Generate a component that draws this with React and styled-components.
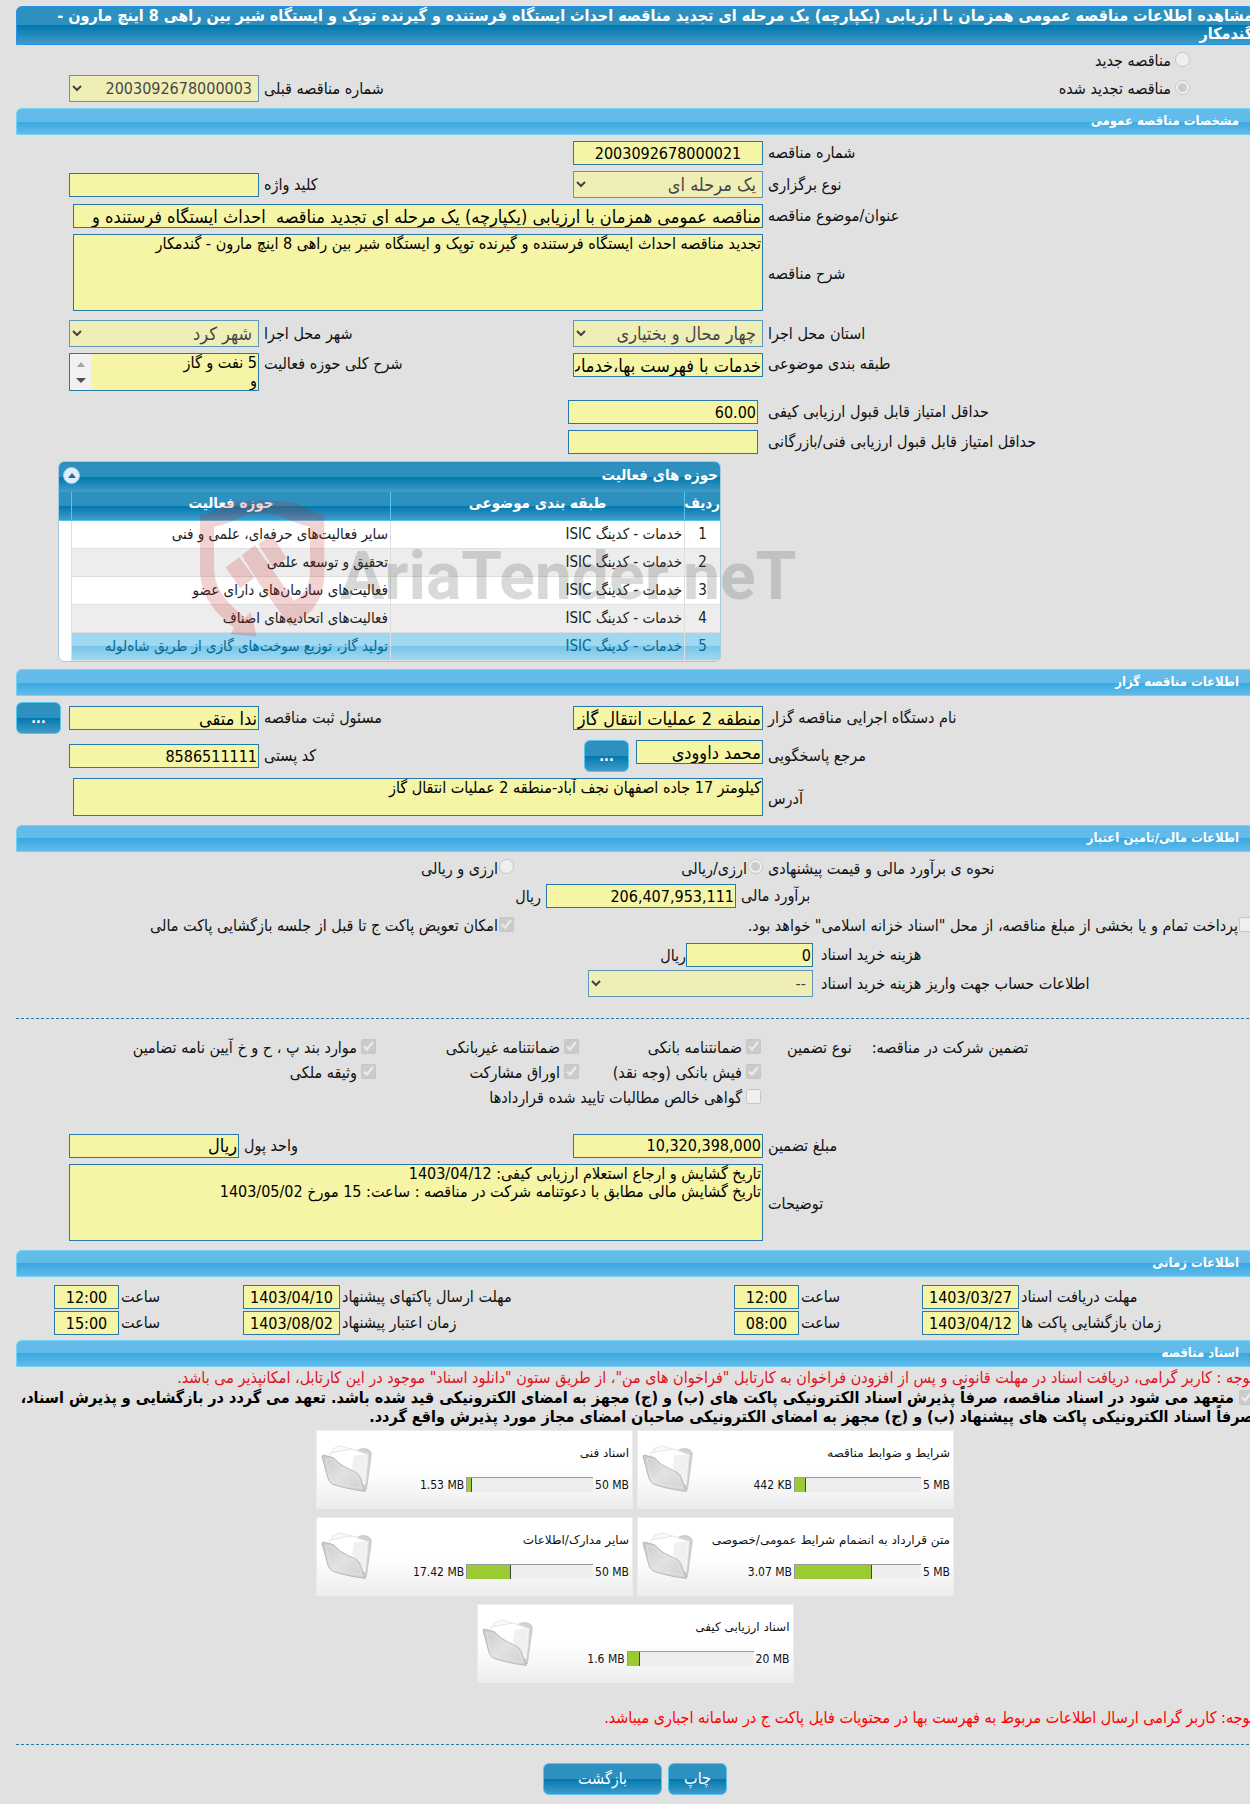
import React from "react";
import styled, { createGlobalStyle, css } from "styled-components";

const activities = [
  "سایر فعالیت‌های حرفه‌ای، علمی و فنی",
  "تحقیق و توسعه علمی",
  "فعالیت‌های سازمان‌های دارای عضو",
  "فعالیت‌های اتحادیه‌های اصناف",
  "تولید گاز، توزیع سوخت‌های گازی از طریق شاه‌لوله",
];

const times = [
  ["مهلت دریافت اسناد", "1403/03/27", "12:00", "مهلت ارسال پاکتهای پیشنهاد", "1403/04/10", "12:00"],
  ["زمان بازگشایی پاکت ها", "1403/04/12", "08:00", "زمان اعتبار پیشنهاد", "1403/08/02", "15:00"],
];

const documents = [
  { title: "شرایط و ضوابط مناقصه", used: "442 KB", max: "5 MB", percent: 9 },
  { title: "اسناد فنی", used: "1.53 MB", max: "50 MB", percent: 4 },
  { title: "متن قرارداد به انضمام شرایط عمومی/خصوصی", used: "3.07 MB", max: "5 MB", percent: 61 },
  { title: "سایر مدارک/اطلاعات", used: "17.42 MB", max: "50 MB", percent: 35 },
  { title: "اسناد ارزیابی کیفی", used: "1.6 MB", max: "20 MB", percent: 10 },
];

//A label and the text box it names, as two cells of a row
const Field = ({ id, label, value, align, words }) => (
  <>
    <Label htmlFor={id}>{label}</Label>
    <Input id={id} defaultValue={value} $align={align} $words={words} readOnly />
  </>
);

const SelectField = ({ id, label, value, words }) => (
  <>
    <Label htmlFor={id}>{label}</Label>
    <Select id={id} $words={words} disabled>
      <option>{value}</option>
    </Select>
  </>
);

const Choice = ({ type = "checkbox", name, label, checked = false, spaced }) => (
  <ChoiceLabel $spaced={spaced}>
    <Tick type={type} name={name} defaultChecked={checked} disabled />
    <span>{label}</span>
  </ChoiceLabel>
);

const FolderIcon = () => (
  <svg width="54" height="48" viewBox="0 0 56 60" preserveAspectRatio="none" aria-hidden="true">
    <defs>
      <linearGradient id="folderFront" x1="0" y1="0" x2="1" y2="1">
        <stop offset="0" stopColor="#c9c9c9" />
        <stop offset="0.5" stopColor="#e2e2e2" />
        <stop offset="1" stopColor="#cfcfcf" />
      </linearGradient>
    </defs>
    <path d="M35 9 Q41 3 47 5 Q53 7 52 13 L47 56 L38 52 Z" fill="#d2d2d2" stroke="#c4c4c4" />
    <path d="M12 5 L20 1 L40 8 L42 46 L14 30 Z" fill="#fafafa" stroke="#e2e2e2" />
    <path d="M9 10 L32 5 L49 12 L46 50 L12 40 Z" fill="#fff" stroke="#e2e2e2" />
    <path d="M34 13 L48 12 L45 48 L32 28 Z" fill="#f0f0f0" />
    <path
      d="M1 14 Q1 12 4 13 L13 16 Q19 25 29 30 Q38 34 40 39 Q43 47 46 58 Q26 55 12 49 Q8 46 7 41 Z"
      fill="url(#folderFront)"
      stroke="#b2b2b2"
    />
    <path d="M5 17 L12 19 Q18 28 28 33 Q36 36 38 41 L42 54 Q25 51 14 46 Q10 43 9 38 Z" fill="none" stroke="#e2e2e2" />
  </svg>
);

const Watermark = () => (
  <WatermarkSvg width="620" height="150" viewBox="0 0 620 150" direction="ltr" aria-hidden="true">
    <g transform="scale(0.3333)" fill="rgba(196, 28, 32, 0.2)">
      <path d="M30 62 Q75 52 110 25 Q215 8 325 25 Q360 52 403 60 V235 C403 310 365 365 300 393 L205 262 L248 225 L312 318 C345 295 360 270 360 230 V95 Q310 85 270 62 Q215 50 160 62 Q125 85 72 95 V220 C75 290 115 325 165 368 L182 350 L200 425 L122 418 L132 398 C75 355 30 300 30 225 Z" />
      <path d="M107 217 L148 186 L193 248 L150 280 Z" />
      <path d="M155 181 L195 150 L248 225 L205 262 Z" />
      <path d="M205 148 L245 120 L290 190 L250 220 Z" />
    </g>
    <text x="150" y="104">AriaTender.neT</text>
  </WatermarkSvg>
);

const ActivityTable = () => (
  <Panel>
    <PanelHead>
      <span>حوزه های فعالیت</span>
      <CollapseButton type="button" aria-label="بستن">
        <svg width="8" height="5" viewBox="0 0 8 5">
          <path d="M0 5 L4 0 L8 5 Z" fill="#2b6a94" />
        </svg>
      </CollapseButton>
    </PanelHead>
    <Table>
      <colgroup>
        <col width="36" />
        <col width="294" />
        <col />
        <col width="12" />
      </colgroup>
      <thead>
        <tr>
          <th>ردیف</th>
          <th>طبقه بندی موضوعی</th>
          <th>حوزه فعالیت</th>
          <th aria-hidden="true" />
        </tr>
      </thead>
      <tbody>
        {activities.map((activity, index) => (
          <TableRow key={activity} $selected={index === activities.length - 1}>
            <td>{index + 1}</td>
            <td>خدمات - کدینگ ISIC</td>
            <td>{activity}</td>
            <td />
          </TableRow>
        ))}
      </tbody>
    </Table>
    <Watermark />
  </Panel>
);

const DocumentCard = ({ title, used, max, percent }) => (
  <Card>
    <CardInfo>
      <CardTitle>{title}</CardTitle>
      <Usage>
        <span dir="ltr">{max}</span>
        <Track>
          <Bar style={{ width: `${percent}%` }} />
        </Track>
        <span dir="ltr">{used}</span>
      </Usage>
    </CardInfo>
    <FolderIcon />
  </Card>
);

function App() {
  return (
    <>
      <GlobalStyle />
      <Page>
        <TitleBar>
          مشاهده اطلاعات مناقصه عمومی همزمان با ارزیابی (یکپارچه) یک مرحله ای تجدید مناقصه احداث ایستگاه فرستنده و گیرنده توپک و
          ایستگاه شیر بین راهی 8 اینچ مارون - گندمکار
        </TitleBar>

        <Body>
          <KindRow>
            <Choice type="radio" name="kind" label="مناقصه جدید" spaced />
          </KindRow>
          <KindRow>
            <Choice type="radio" name="kind" label="مناقصه تجدید شده" checked spaced />
            <SelectField id="previous" label="شماره مناقصه قبلی" value="2003092678000003" />
          </KindRow>
        </Body>

        <SectionBar>مشخصات مناقصه عمومی</SectionBar>
        <Body>
          <Row>
            <Field id="number" label="شماره مناقصه" value="2003092678000021" align="center" />
          </Row>
          <Row>
            <SelectField id="stage" label="نوع برگزاری" value="یک مرحله ای" words />
            <Field id="keyword" label="کلید واژه" value="" />
          </Row>
          <Row>
            <Label htmlFor="subject">عنوان/موضوع مناقصه</Label>
            <WideInput
              id="subject"
              defaultValue="مناقصه عمومی همزمان با ارزیابی (یکپارچه) یک مرحله ای تجدید مناقصه  احداث ایستگاه فرستنده و"
              $words
              readOnly
            />
          </Row>
          <Row>
            <Label htmlFor="description">شرح مناقصه</Label>
            <WideArea
              id="description"
              defaultValue="تجدید مناقصه احداث ایستگاه فرستنده و گیرنده توپک و ایستگاه شیر بین راهی 8 اینچ مارون - گندمکار"
              readOnly
            />
          </Row>
          <Row>
            <SelectField id="province" label="استان محل اجرا" value="چهار محال و بختیاری" words />
            <SelectField id="city" label="شهر محل اجرا" value="شهر کرد" words />
          </Row>
          <TopRow>
            <Field id="category" label="طبقه بندی موضوعی" value="خدمات با فهرست بها،خدمات" words />
            <Label htmlFor="scope">شرح کلی حوزه فعالیت</Label>
            <ScrollBox>
              <ScrollArea id="scope" defaultValue={"5 نفت و گاز\nو"} readOnly />
              <ScrollStrip>
                <svg width="8" height="5" viewBox="0 0 8 5">
                  <path d="M0 5 L4 0 L8 5 Z" fill="#a3a3a3" />
                </svg>
                <svg width="10" height="5" viewBox="0 0 10 5">
                  <path d="M0 0 L5 5 L10 0 Z" fill="#505050" />
                </svg>
              </ScrollStrip>
            </ScrollBox>
          </TopRow>
          <ScoreRow>
            <Field id="quality" label="حداقل امتیاز قابل قبول ارزیابی کیفی" value="60.00" />
          </ScoreRow>
          <ScoreRow>
            <Field id="technical" label="حداقل امتیاز قابل قبول ارزیابی فنی/بازرگانی" value="" />
          </ScoreRow>
          <PanelRow>
            <ActivityTable />
          </PanelRow>
        </Body>

        <SectionBar>اطلاعات مناقصه گزار</SectionBar>
        <Body>
          <Row>
            <Field id="agency" label="نام دستگاه اجرایی مناقصه گزار" value="منطقه 2 عملیات انتقال گاز" words />
            <Field id="registrar" label="مسئول ثبت مناقصه" value="ندا متقی" words />
            <DotsButton type="button">...</DotsButton>
          </Row>
          <Row>
            <Label htmlFor="contact">مرجع پاسخگویی</Label>
            <Group>
              <Input id="contact" defaultValue="محمد داوودی" $words readOnly />
              <DotsButton type="button">...</DotsButton>
            </Group>
            <Field id="postal" label="کد پستی" value="8586511111" />
          </Row>
          <Row>
            <Label htmlFor="address">آدرس</Label>
            <WideArea id="address" defaultValue="کیلومتر 17 جاده اصفهان نجف آباد-منطقه 2 عملیات انتقال گاز" $short readOnly />
          </Row>
        </Body>

        <SectionBar>اطلاعات مالی/تامین اعتبار</SectionBar>
        <Body>
          <ChoiceRow>
            <LabelText>نحوه ی برآورد مالی و قیمت پیشنهادی</LabelText>
            <Choice type="radio" name="currency" label="ارزی/ریالی" checked />
            <Choice type="radio" name="currency" label="ارزی و ریالی" />
          </ChoiceRow>
          <EstimateRow>
            <Field id="estimate" label="برآورد مالی" value="206,407,953,111" />
            <span>ریال</span>
          </EstimateRow>
          <PacketRow>
            <Choice label={'پرداخت تمام و یا بخشی از مبلغ مناقصه، از محل "اسناد خزانه اسلامی" خواهد بود.'} />
            <Choice label="امکان تعویض پاکت ج تا قبل از جلسه بازگشایی پاکت مالی" checked />
          </PacketRow>
          <Costs>
            <Label htmlFor="cost">هزینه خرید اسناد</Label>
            <CostCell>
              <CostInput id="cost" defaultValue="0" readOnly />
              <span>ریال</span>
            </CostCell>
            <Label htmlFor="account">اطلاعات حساب جهت واریز هزینه خرید اسناد</Label>
            <AccountSelect id="account" disabled>
              <option>--</option>
            </AccountSelect>
          </Costs>
        </Body>
        <Divider />
        <Guarantee>
          <Heads>
            <span>تضمین شرکت در مناقصه:</span>
            <span>نوع تضمین</span>
          </Heads>
          <Options>
            <Choice label="ضمانتنامه بانکی" checked spaced />
            <Choice label="ضمانتنامه غیربانکی" checked spaced />
            <Choice label="موارد بند پ ، ح و خ آیین نامه تضامین" checked spaced />
            <Choice label="فیش بانکی (وجه نقد)" checked spaced />
            <Choice label="اوراق مشارکت" checked spaced />
            <Choice label="وثیقه ملکی" checked spaced />
            <Choice label="گواهی خالص مطالبات تایید شده قراردادها" spaced />
          </Options>
        </Guarantee>
        <Body>
          <AmountRow>
            <Field id="amount" label="مبلغ تضمین" value="10,320,398,000" />
            <Field id="unit" label="واحد پول" value="ریال" words />
          </AmountRow>
          <Row>
            <Label htmlFor="notes">توضیحات</Label>
            <WideArea
              id="notes"
              defaultValue={
                "تاریخ گشایش و ارجاع استعلام ارزیابی کیفی: 1403/04/12\nتاریخ گشایش مالی مطابق با دعوتنامه شرکت در مناقصه : ساعت: 15 مورخ 1403/05/02"
              }
              $full
              readOnly
            />
          </Row>
        </Body>

        <SectionBar>اطلاعات زمانی</SectionBar>
        <Times>
          {times.map(([first, firstDate, firstHour, second, secondDate, secondHour], index) => (
            <TimeRow key={first}>
              <Field id={`date-a${index}`} label={first} value={firstDate} align="center" />
              <Field id={`hour-a${index}`} label="ساعت" value={firstHour} align="center" />
              <Field id={`date-b${index}`} label={second} value={secondDate} align="center" />
              <Field id={`hour-b${index}`} label="ساعت" value={secondHour} align="center" />
            </TimeRow>
          ))}
        </Times>

        <SectionBar>اسناد مناقصه</SectionBar>
        <Notice $color="#e0121b">
          توجه : کاربر گرامی، دریافت اسناد در مهلت قانونی و پس از افزودن فراخوان به کارتابل "فراخوان های من"، از طریق ستون "دانلود
          اسناد" موجود در این کارتابل، امکانپذیر می باشد.
        </Notice>
        <Pledge>
          <Tick type="checkbox" defaultChecked disabled /> متعهد می شود در اسناد مناقصه، صرفاً پذیرش اسناد الکترونیکی پاکت های (ب) و
          (ج) مجهز به امضای الکترونیکی قید شده باشد. تعهد می گردد در بازگشایی و پذیرش اسناد، صرفاً اسناد الکترونیکی پاکت های
          پیشنهاد (ب) و (ج) مجهز به امضای الکترونیکی صاحبان امضای مجاز مورد پذیرش واقع گردد.
        </Pledge>
        <Cards>
          {documents.map((doc) => (
            <DocumentCard {...doc} key={doc.title} />
          ))}
        </Cards>
        <Notice $color="#ff0000">
          توجه: کاربر گرامی ارسال اطلاعات مربوط به فهرست بها در محتویات فایل پاکت ج در سامانه اجباری میباشد.
        </Notice>
        <Divider />
        <Actions>
          <ActionButton type="button">چاپ</ActionButton>
          <ActionButton type="button" $wide>
            بازگشت
          </ActionButton>
        </Actions>
      </Page>
    </>
  );
}

const darkBlue = "linear-gradient(#2e90bf 50%, #0078ae 50%, #439bc8)";
const lightBlue = "linear-gradient(#62bbe9 50%, #39a8e2 50%, #62bbe9)";

const GlobalStyle = createGlobalStyle`
  * {
    box-sizing: border-box;
  }
  body {
    margin: 0;
    background: #e1e1e1;
    color: #111;
    overflow-x: hidden;
  }
  body, input, select, textarea, button {
    font-family: "DejaVu Sans Condensed", "DejaVu Sans", sans-serif;
    font-size: 16px;
  }
`;

const Page = styled.main`
  direction: rtl;
  padding: 6px 0 7px 16px;
  margin-right: -4px;
`;

const TitleBar = styled.h1`
  margin: 0;
  min-height: 39px;
  border: 1px solid #2694e8;
  border-radius: 6px 6px 0 0;
  background: ${darkBlue};
  color: #fff;
  font-size: 16px;
  line-height: 18px;
`;

const SectionBar = styled.h2`
  margin: 0;
  height: 27px;
  padding: 0 14px;
  border: 1px solid #74d0f5;
  border-radius: 6px 6px 0 0;
  background: ${lightBlue};
  color: #fff;
  font-size: 13px;
  line-height: 24px;
`;

const Body = styled.section`
  display: flex;
  flex-direction: column;
  gap: 6px;
  padding: 6px 0;
`;

const Row = styled.div`
  display: grid;
  grid-template-columns: 486fr 190px 304fr 190px 48fr;
  column-gap: 5px;
  align-items: center;
`;

const TopRow = styled(Row)`
  align-items: start;
`;

const KindRow = styled(Row)`
  grid-template-columns: 486fr 499fr 190px 48fr;
  height: 27px;
  &:first-child {
    height: 18px;
  }
  > :first-child {
    padding-right: 64px;
  }
`;

const ScoreRow = styled(Row)`
  column-gap: 10px;
  grid-template-columns: 486fr 190px 542fr;
`;

const PanelRow = styled.div`
  display: grid;
  grid-template-columns: 533fr 663px 42fr;
  padding: 1px 0;
  > * {
    grid-column: 2;
  }
`;

const ChoiceRow = styled(Row)`
  grid-template-columns: 486fr 244fr 498fr;
  height: 20px;
`;

const EstimateRow = styled(Row)`
  grid-template-columns: 513fr 190px 525fr;
`;

const PacketRow = styled(Row)`
  grid-template-columns: 735fr 498fr;
  min-height: 23px;
`;

const Costs = styled.div`
  display: grid;
  grid-template-columns: 433fr 797fr;
  gap: 3px 8px;
  align-items: center;
`;

const CostCell = styled.div`
  display: flex;
  align-items: center;
`;

const AmountRow = styled(Row)`
  grid-template-columns: 486fr 190px 324fr 170px 48fr;
  min-height: 25px;
`;

const Times = styled.section`
  display: flex;
  flex-direction: column;
  gap: 2px;
  padding: 8px 0 5px;
`;

const TimeRow = styled(Row)`
  grid-template-columns: 233fr 97px 119fr 65px 390fr 97px 120fr 65px 36fr;
  column-gap: 2px;
`;

const Label = styled.label`
  text-align: left;
  line-height: 22px;
  white-space: nowrap;
`;

const LabelText = styled.span`
  text-align: left;
`;

const boxed = css`
  width: 100%;
  margin: 0;
  border: 1px solid #2779aa;
  border-radius: 0;
  background: #f6f4a5;
  color: #000;
`;

const Input = styled.input`
  ${boxed}
  height: 24px;
  padding: 0 1px;
  font-size: ${(props) => (props.$words ? "18px" : "16px")};
  text-align: ${(props) => props.$align || "right"};
`;

const WideInput = styled(Input)`
  grid-column: 2 / 5;
  width: calc(100% - 4px);
`;

const CostInput = styled(Input)`
  width: 127px;
`;

const Area = styled.textarea`
  ${boxed}
  display: block;
  padding: 0 1px;
  line-height: 18px;
  resize: none;
`;

const WideArea = styled(Area)`
  grid-column: 2 / 5;
  width: ${(props) => (props.$full ? "100%" : "calc(100% - 4px)")};
  height: ${(props) => (props.$short ? "38px" : "77px")};
  margin-bottom: 3px;
`;

const Select = styled.select`
  ${boxed}
  height: 27px;
  padding: 0 2px;
  font-size: ${(props) => (props.$words ? "18px" : "16px")};
`;

const AccountSelect = styled(Select)`
  width: 225px;
`;

const ScrollBox = styled.div`
  ${boxed}
  display: flex;
  height: 38px;
  margin-bottom: 3px;
`;

const ScrollArea = styled(Area)`
  flex: 1;
  border: 0;
  overflow: hidden;
`;

const ScrollStrip = styled.div`
  display: flex;
  flex-direction: column;
  align-items: center;
  justify-content: space-between;
  width: 21px;
  padding: 8px 0 7px;
  background: #f1f1f1;
`;

const ChoiceLabel = styled.label`
  display: flex;
  align-items: center;
  gap: ${(props) => (props.$spaced ? "4px" : "1px")};
  white-space: nowrap;
`;

const Tick = styled.input`
  flex: none;
  width: 15px;
  height: 15px;
  margin: 0 0 3px;
`;

const Group = styled.div`
  display: flex;
  gap: 7px;
  align-items: start;
  > input {
    width: 127px;
  }
`;

const button = css`
  border: 1px solid #57c4f0;
  border-radius: 6px;
  background: ${darkBlue};
  color: #fff;
  cursor: pointer;
`;

const DotsButton = styled.button`
  ${button}
  justify-self: end;
  width: 45px;
  height: 32px;
  padding: 0;
  font-size: 14px;
  font-weight: bold;
`;

const Divider = styled.hr`
  margin: 15px 0 0;
  border: 0;
  border-top: 1px dashed #2779aa;
`;

const Guarantee = styled.section`
  display: grid;
  grid-template-columns: 493fr 745fr;
  align-items: start;
  padding: 16px 0 17px;
`;

const Heads = styled.div`
  display: flex;
  justify-content: flex-end;
  gap: 20px;
  padding-left: 26px;
  line-height: 25px;
  white-space: nowrap;
`;

const Options = styled.div`
  display: grid;
  grid-template-columns: 182px 203px 1fr;
  grid-auto-rows: 25px;
  align-items: center;
  > :last-child {
    grid-column: 1 / -1;
  }
`;

const Panel = styled.div`
  position: relative;
  border: 1px solid #a6c9e2;
  border-radius: 6px;
  background: #fff;
`;

const PanelHead = styled.div`
  display: flex;
  align-items: center;
  justify-content: space-between;
  height: 30px;
  padding: 0 2px 4px 4px;
  border-radius: 5px 5px 0 0;
  background: ${darkBlue};
  color: #fff;
  font-size: 15px;
  font-weight: bold;
`;

const CollapseButton = styled.button`
  display: flex;
  align-items: center;
  justify-content: center;
  width: 17px;
  height: 17px;
  padding: 0;
  border: 1px solid #a6c9e2;
  border-radius: 50%;
  background: #dfeffc;
`;

const Table = styled.table`
  width: 100%;
  table-layout: fixed;
  border-collapse: separate;
  border-spacing: 0;
  th {
    height: 29px;
    padding: 0 0 6px;
    border-left: 1px solid #57c4f0;
    border-bottom: 1px solid #57c4f0;
    background: ${darkBlue};
    color: #fff;
    font-size: 15px;
    line-height: 20px;
  }
  th:last-child {
    border-left: 0;
  }
`;

const TableRow = styled.tr`
  td {
    height: 28px;
    padding: 0 2px 2px;
    border-left: 1px solid #dedede;
    border-bottom: 1px solid #dedede;
    font-size: 15px;
    line-height: 20px;
    white-space: nowrap;
    color: ${(props) => (props.$selected ? "#026890" : "#222")};
    background: ${(props) => (props.$selected ? "linear-gradient(#a0d8f2 50%, #79c5e7 50%, #9fd8f2)" : "#fff")};
  }
  &:nth-child(2) td,
  &:nth-child(4) td {
    background: #eeeded;
  }
  td:first-child {
    text-align: center;
  }
  && td:last-child {
    border: 0;
    background: none;
  }
`;

//Sits over the table and runs past its right edge
const WatermarkSvg = styled.svg`
  position: absolute;
  top: 33px;
  left: 131px;
  pointer-events: none;
  text {
    font-family: Roboto, sans-serif;
    font-size: 66px;
    font-weight: bold;
    fill: rgba(60, 65, 65, 0.2);
  }
`;

const Notice = styled.p`
  margin: 0;
  padding: 2px 0;
  color: ${(props) => props.$color};
  line-height: 18px;
`;

const Pledge = styled.label`
  display: block;
  color: #000;
  font-weight: bold;
  line-height: 18px;
  input {
    vertical-align: middle;
  }
`;

const Cards = styled.section`
  display: flex;
  flex-wrap: wrap;
  justify-content: center;
  gap: 8px 4px;
  width: 645px;
  margin: 4px auto 24px;
`;

const Card = styled.article`
  display: flex;
  justify-content: space-between;
  width: 317px;
  height: 79px;
  padding: 14px 3px 0 4px;
  border: 1px solid #ececec;
  background: linear-gradient(#fff 50%, #ededed);
`;

const CardInfo = styled.div`
  flex: 1;
`;

const CardTitle = styled.h3`
  margin: 0;
  font-family: "DejaVu Sans", sans-serif;
  font-size: 12px;
  font-weight: normal;
  line-height: 16px;
  white-space: nowrap;
`;

const Usage = styled.div`
  display: flex;
  align-items: center;
  gap: 2px;
  padding-top: 16px;
  font-size: 12px;
  line-height: 16px;
`;

const Track = styled.div`
  display: flex;
  justify-content: flex-end;
  width: 127px;
  height: 15px;
  border-top: 1px solid #999;
  border-left: 1px solid #999;
  background: #eee;
`;

const Bar = styled.div`
  border-right: 1px solid #444;
  background: #9acb34;
`;

const Actions = styled.div`
  display: flex;
  justify-content: center;
  gap: 6px;
  padding-top: 18px;
`;

const ActionButton = styled.button`
  ${button}
  width: ${(props) => (props.$wide ? "119px" : "59px")};
  height: 32px;
`;

export default App;
